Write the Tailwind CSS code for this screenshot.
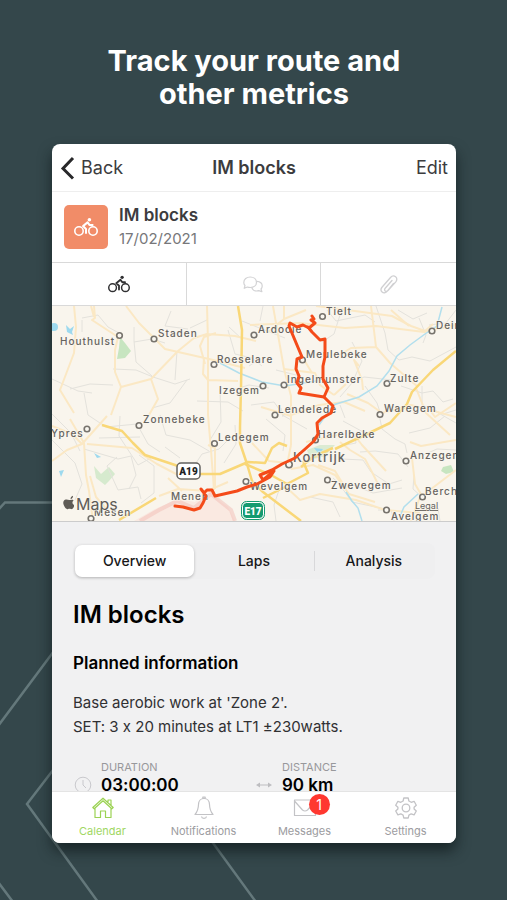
<!DOCTYPE html>
<html lang="en">
<head>
<meta charset="utf-8">
<meta name="viewport" content="width=device-width, initial-scale=1">
<title>IM blocks</title>
<script src="https://cdn.jsdelivr.net/npm/@tailwindcss/browser@4"></script>
</head>
<body class="bg-[#34474b] font-['Inter',sans-serif] [font-feature-settings:'calt'_0]">
<svg width="0" height="0" class="absolute" aria-hidden="true">
  <symbol id="bike" viewBox="0 0 24 19">
    <g fill="none" stroke="currentColor" stroke-width="1.6" stroke-linecap="round" stroke-linejoin="round">
      <circle cx="5" cy="13.5" r="4.2"/><circle cx="19" cy="13.5" r="4.2"/>
      <path stroke-width="2" d="M12 15.5V11.4L9 8.6L13.6 4.9L15.6 7.6H18.6"/>
    </g>
    <circle cx="15.4" cy="2.2" r="1.8" fill="currentColor"/>
  </symbol>
</svg>
<main class="relative min-h-screen overflow-hidden pt-11 pr-[51px] pb-[58px] pl-[52px]">
  <svg class="absolute top-0 left-0 h-[900px] w-[507px]" viewBox="0 0 507 900" fill="none" stroke="#64787b" stroke-width="2.5" aria-hidden="true">
    <path d="M-2 510L5 502.500H60M-2 726L60 643M60 761L27 804L98 902M-2 882L13 902M205 832L256 902"/>
  </svg>
  <h1 class="relative text-center text-[29px] leading-[33px] font-bold text-white">Track your route and<br>other metrics</h1>

  <section class="relative mt-[34px] overflow-hidden rounded-lg bg-white text-[#3c3c3e] shadow-[0_8px_14px_rgba(10,20,22,0.65)]">
    <header class="grid h-12 grid-cols-3 items-center border-b border-[#eeeeee] px-2 text-lg">
      <button type="button" class="flex items-center gap-[6px]">
        <svg class="h-6 w-[15px]" viewBox="0 0 15 24" fill="none" stroke="#28282a" stroke-width="3" aria-hidden="true"><path d="M13 2L3 12.500L13 22.500"/></svg>Back</button>
      <h2 class="text-center text-lg font-semibold">IM blocks</h2>
      <button type="button" class="justify-self-end">Edit</button>
    </header>

    <div class="flex h-[70px] items-center gap-[11px] px-3">
      <span class="flex size-11 items-center justify-center rounded-[5px] bg-[#f18c68] text-white"><svg class="h-5 w-6" aria-hidden="true"><use href="#bike"/></svg></span>
      <div>
        <p class="text-[17px] leading-6 font-semibold">IM blocks</p>
        <p class="text-[15px] leading-6 text-[#77777a]">17/02/2021</p>
      </div>
    </div>

    <div class="grid h-11 grid-cols-3 divide-x divide-[#d9d9d9] border-y border-[#d9d9d9]">
      <button type="button" aria-label="Activity" class="flex items-center justify-center text-[#303032]"><svg class="h-[18px] w-[22px]" aria-hidden="true"><use href="#bike"/></svg></button>
      <button type="button" aria-label="Comments" class="flex items-center justify-center">
        <svg class="h-[17px] w-5" viewBox="0 0 20 17" fill="none" stroke="#d2d2d4" stroke-width="1.200" stroke-linejoin="round" aria-hidden="true"><path d="M13.500 6.500C13.500 9.500 10.700 11.500 7.200 11.500C6.200 11.500 5.200 11.300 4.400 11L1.200 12.300L2 9.500C1.200 8.700.8 7.600.8 6.500C.8 3.300 3.600 1 7.200 1S13.500 3.300 13.500 6.500Z"/><path d="M13.700 5.400C17 5.600 19.200 7.600 19.200 10C19.200 11.200 18.800 12.200 18 13L18.900 15.700L15.800 14.600C12.800 15.500 9.800 14.400 8.700 11.600"/></svg></button>
      <button type="button" aria-label="Attachments" class="flex items-center justify-center">
        <svg class="h-[19px] w-[18px]" viewBox="0 0 18 19" fill="none" stroke="#d0d0d2" stroke-width="1.300" stroke-linecap="round" aria-hidden="true"><path d="M13.500 8.500L7.300 16.200C5.800 18 3.500 18.300 2.100 17C.7 15.700.8 13.600 2.200 12L10.500 2.500C11.900.9 14.100.6 15.600 1.800C17.200 3.100 17.200 5.200 15.800 6.900L8 15.500C7 16.500 5.900 16.500 5.200 15.900C4.400 15.200 4.400 14.200 5.200 13.300L12 5.500"/></svg></button>
    </div>

    <figure class="border-b border-[#cccccc]">
      <svg class="block h-[215px] w-full bg-[#f9f5ed]" viewBox="52 306 404 215" preserveAspectRatio="xMidYMid slice" role="img" aria-label="Route map">
        <g fill="#c7e5c0"><path d="M120 337L125 343L131 351L125 358L117 359L119 348Z"/><path opacity=".7" d="M94 466L101 474L109 467L115 474L109 481L105 485L96 478Z"/><path d="M443 467L451 465L454 472L446 474L441 471Z"/><path opacity=".6" d="M307 450L320 445L335 445L325 456L310 460Z"/></g>
        <g fill="#9dd9ee"><circle cx="54" cy="327" r="4"/><path d="M66 325L70 329L74 326L72 332L73 335L67 332Z"/><path d="M94 453L101 457L97 458Z"/><path d="M59 471L64 470L61 477Z"/><path d="M314 448L323 449L319 454Z"/></g>
        <path d="M134 521L155 509L178 499L195 502L207 488L221 502L228 507L235 521Z" fill="#fae9e1"/>
        <path d="M140 521L159 510L177 501L194 508L211 494L221 502L231 510L235 521" fill="none" stroke="#f2bdb5" stroke-width="4" opacity=".5"/>
        <g fill="none" stroke="#e4e2dc" stroke-width="1">
          <path d="M82 318L98 315L108 327L119 333M82 320L82 332M52 379L78 391L92 393M70 389L90 384L113 385M113 369L136 370L153 377L175 384L190 379M134 327L134 341L136 362L152 376M134 342L152 339L165 343M177 351L175 380M190 328L207 320M171 311L165 326L188 329M187 380L170 403L152 408M197 401L228 402L243 411M84 393L88 415L106 427L137 424L148 444L160 452M52 414L71 433L80 451M160 415L166 435L190 440L209 451M120 416L119 436L138 465L151 458M117 457L107 466L118 490L138 487L141 499M99 438L140 437M52 440L75 463L82 484L75 500M84 449L118 459L131 456L136 475L129 489M139 455L154 466L154 493L141 503M228 330L235 354L252 358L262 366M242 321L262 329L285 338M232 390L249 385L269 388M263 306L260 321M251 405L274 402L284 416L307 429M327 310L336 321L365 315L375 322M376 306L385 333L388 350M352 342L362 361L352 383L340 397M352 383L364 377L392 380M365 386L377 403L380 412M388 350L399 360L412 357L430 361L456 347M419 318L426 335L423 343M401 386L422 393L433 391L443 402L453 399M422 386L422 405L443 414L456 410M266 419L285 435L283 451M235 425L236 444L224 463M379 414L382 429L395 439L405 444L407 453M409 433L430 428L445 416M435 411L456 423M360 452L375 451L398 454L408 467M342 459L363 460L371 472L389 484L402 480M333 478L344 488L353 485L373 493L402 488M280 487L274 505L276 521M310 497L333 502L340 517M342 488L352 502L385 509M378 510L391 510L394 521M423 455L437 449L456 450M414 475L413 489L422 497M438 508L440 521M429 325L446 323L456 310M398 310L413 319L427 313M340 315L334 334L322 342"/>
          <path d="M192 469L202 454L219 449L230 438M165 447L180 458M220 389L221 422L210 440M260 359L249 366M243 340L229 327M276 370L300 376M281 408L283 417M340 405L345 418M343 421L365 433M355 436L356 443L346 445"/>
        </g>
        <g fill="none" stroke="#fbe8c4" stroke-width="2" stroke-linejoin="round">
          <path d="M74 306L76 327L74 353L60 390L74 413M94 306L95 318L92 320L118 337L115 350L115 372L121 387L111 415M126 306L139 323L165 349L209 359L245 368M207 306L208 341L208 415L211 450L214 490M121 387L151 379L158 399L149 415M151 379L178 351L194 338L207 334L235 336L256 341M205 364L200 346L204 337L216 333M204 358L203 374L208 380L238 381M91 306L94 317M70 419L84 443L86 475L89 491L93 521M52 461L67 450L82 444L107 416M87 444L132 448L157 464L178 475M82 444L72 434L52 426M90 476L96 497L109 512M159 496L178 489L207 491L228 482M168 478L182 491M208 445L215 448L215 489"/>
          <path d="M273 306L284 369L291 396L291 445M250 325L300 323L345 328L376 326L424 332L456 325M316 306L340 309L392 316L411 326L425 331L433 324M338 356L351 348L376 347L371 306M376 347L390 363L418 387M300 353L312 373M359 366L354 360L362 380L363 390M347 394L368 403L382 413L411 405L456 417M416 388L426 413L450 435M291 415L319 405L344 402L365 411M355 436L362 445L386 471M340 442L350 450L365 459L373 474L378 484M412 458L415 484L422 496L456 470M410 442L421 446L456 440M420 497L411 521M291 469L313 465L335 475L349 494L375 502M286 487L300 500L320 494L356 500L385 510L420 513M318 465L335 471L346 489M291 445L288 460M252 443L269 461L288 463"/>
          <path d="M284 306L284 319L268 332M284 319L306 310M284 369L315 373L320 385L334 395M334 395L346 384M306 442L337 435M430 410L435 417L456 403M261 407L291 416M391 310L409 326"/>
        </g>
        <g fill="none" stroke="#b2dfed" stroke-width="1.500"><path d="M442 307L437 326L425 334L410 345L397 356L389 371L377 386L359 397L333 405L319 425"/><path d="M220 363L239 373L262 382L285 386L316 381"/><path d="M418 494L404 507L400 516M346 492L352 501L358 508L362 521"/></g>
        <g fill="none" stroke="#f9d777" stroke-width="2.500" stroke-linejoin="round"><path d="M238 306L242 330L241 388L240 427L240 443L247 464L252 481L263 492L301 521"/><path d="M102 425L122 431L133 443L145 455L178 466M195 474L220 474L248 462L265 463L272 448L279 443L287 446M301 467L313 457L333 448M335 449L367 434L390 423L407 404L412 392L433 370L456 351"/><path d="M119 520L156 498M245 464L271 475L287 484L308 473L303 461M263 498L285 487"/></g>
        <g fill="#faf7f0" stroke="#77736d" stroke-width="1.600"><circle cx="119.500" cy="335.500" r="2.800"/><circle cx="154" cy="339" r="2.800"/><circle cx="214" cy="364.500" r="2.800"/><circle cx="322.500" cy="316.500" r="2.800"/><circle cx="254" cy="335" r="2.800"/><circle cx="302.500" cy="360" r="2.800"/><circle cx="263" cy="386" r="2.800"/><circle cx="284" cy="385" r="2.800"/><circle cx="432" cy="331" r="2.800"/><circle cx="387" cy="383.500" r="2.800"/><circle cx="275" cy="415" r="2.800"/><circle cx="380" cy="414.500" r="2.800"/><circle cx="139" cy="425.500" r="2.800"/><circle cx="87" cy="429" r="2.800"/><circle cx="214.500" cy="443.500" r="2.800"/><circle cx="315.500" cy="440" r="2.800"/><circle cx="289" cy="464.500" r="3.200"/><circle cx="406" cy="461" r="2.800"/><circle cx="327.500" cy="480" r="2.800"/><circle cx="246" cy="481.500" r="2.800"/><circle cx="422.500" cy="497" r="2.800"/><circle cx="386.500" cy="510" r="2.800"/><circle cx="91" cy="518.500" r="2.800"/></g>
        <g class="fill-[#66635f] text-[10px] font-medium tracking-widest" stroke="#faf7f0" stroke-width="2" paint-order="stroke" stroke-opacity=".6">
          <text x="60" y="345">Houthulst</text><text x="158" y="337">Staden</text><text x="217" y="363">Roeselare</text><text x="219" y="394">Izegem</text><text x="326" y="315">Tielt</text><text x="258" y="333">Ardooie</text><text x="306" y="358">Meulebeke</text><text x="287" y="383">Ingelmunster</text><text x="436" y="329">Deinze</text><text x="390" y="382">Zulte</text><text x="278" y="413">Lendelede</text><text x="384" y="412">Waregem</text><text x="143" y="423">Zonnebeke</text><text x="51" y="437">Ypres</text><text x="218" y="441">Ledegem</text><text x="318" y="438">Harelbeke</text><text x="410" y="459">Anzegem</text><text x="331" y="489">Zwevegem</text><text x="250" y="490">Wevelgem</text><text x="171" y="500">Menen</text><text x="425" y="495">Berchem</text><text x="391" y="520">Avelgem</text><text x="94" y="516">Mesen</text>
          <text x="293" y="462" class="text-[13px]">Kortrijk</text>
        </g>
        <g fill="none" stroke="#f44b19" stroke-width="3" stroke-linejoin="round" stroke-linecap="round"><path d="M312 316L314 319L311 320L315 323L309 328L303 325L297 327L290 323L289 326L302 357L297 359L296 369L299 376L297 383L301 388L299 393L324 397L333 406L331 413L322 418L317 423L318 434L314 441L304 450L295 458L282 464L272 470L260 475L263 480L274 471L270 477L257 484L247 487L237 491L215 496L212 490L207 490L204 493L201 489L206 496L203 503L200 508L194 510L183 507L175 506"/><path d="M308 327L312 332L320 340L325 339L325 357L323 366L323 379L328 388L324 397"/></g>
        <rect x="177" y="463" width="23" height="16" rx="4" fill="#fff" stroke="#62605d" stroke-width="1.500"/>
        <text x="188.500" y="474.500" text-anchor="middle" class="fill-[#222222] font-['Roboto',sans-serif] text-[10px] font-black">A19</text>
        <rect x="242.500" y="502.500" width="21" height="16" rx="4" fill="#159b70" stroke="#fff"/><rect x="241.500" y="501.500" width="23" height="18" rx="5" fill="none" stroke="#159b70"/>
        <text x="253" y="514.500" text-anchor="middle" class="fill-white font-['Roboto',sans-serif] text-[10px] font-black">E17</text>
        <g fill="#5f5b56"><path d="M70.600 499.200C70.400 497.400 71.500 496.200 73 495.800C73.200 497.500 72 499 70.600 499.200ZM74 506.600C73 508.800 71.900 509.500 70.900 509C69.900 508.500 69.100 508.500 68.100 509C66.600 509.700 65.200 508.200 64.200 506.100C62.500 502.900 63.200 500 65.900 499.600C67.200 499.300 68.300 500.100 69.200 500.100S71.800 499 73.600 500.200C71.900 501.600 72 504 74 505Z"/>
        <text x="76" y="510" class="text-base" stroke="#faf7f0" stroke-width="1" paint-order="stroke">Maps</text></g>
        <a href="#legal"><text x="415" y="509" class="fill-[#66635f] text-[9px] underline">Legal</text></a>
      </svg>
    </figure>

    <div class="bg-[#f1f1f2] px-[21px] pt-[21px] text-[#171719]">
      <div class="grid h-9 grid-cols-3 items-stretch rounded-lg bg-[#efeff0] p-[2px] text-sm font-medium">
        <button type="button" class="rounded-[7px] bg-white shadow-[0_1px_3px_rgba(0,0,0,0.25)]">Overview</button>
        <button type="button">Laps</button>
        <button type="button" class="flex items-center before:h-5 before:w-px before:bg-[#d8d8da]"><span class="flex-1">Analysis</span></button>
      </div>
      <h3 class="mt-5 text-2xl leading-8 font-semibold text-black">IM blocks</h3>
      <h4 class="mt-5 text-[17px] leading-6 font-semibold text-black">Planned information</h4>
      <p class="mt-4 text-[15px] leading-6 text-[#303032]">Base aerobic work at 'Zone 2'.<br>SET: 3 x 20 minutes at LT1 ±230watts.</p>
      <dl class="mt-5 grid grid-cols-2">
        <div class="grid grid-cols-[20px_1fr] items-end gap-x-2">
          <dt class="col-start-2 text-[11px] leading-4 text-[#98989b]">DURATION</dt>
          <dd class="col-span-2 grid grid-cols-subgrid items-center text-[17px] leading-5 font-semibold text-black"><svg class="size-[18px] justify-self-center" viewBox="0 0 18 18" fill="none" stroke="#c8c8cc" aria-hidden="true"><circle cx="9" cy="9" r="7.800"/><path d="M9 4V9L12 12"/></svg>03:00:00</dd>
        </div>
        <div class="grid grid-cols-[20px_1fr] items-end gap-x-2">
          <dt class="col-start-2 text-[11px] leading-4 text-[#98989b]">DISTANCE</dt>
          <dd class="col-span-2 grid grid-cols-subgrid items-center text-[17px] leading-5 font-semibold text-black"><svg class="h-2 w-4 justify-self-center" viewBox="0 0 16 8" fill="#bdbdc0" stroke="#bdbdc0" aria-hidden="true"><path d="M3 4H13" fill="none"/><path stroke="none" d="M0 4L4 1.500V6.500ZM16 4L12 1.500V6.500Z"/></svg>90 km</dd>
        </div>
      </dl>
    </div>

    <nav class="relative -mt-1 grid grid-cols-4 border-t border-[#e4e4e4] bg-white text-[11px] leading-4 text-[#9c9ca0]">
      <a href="#calendar" class="flex flex-col items-center gap-[3px] pt-1 pb-1 text-[#a0d763]">
        <svg class="size-6" viewBox="0 0 24 24" fill="none" stroke="#9bd253" stroke-width="1.200" stroke-linejoin="round" aria-hidden="true"><path d="M1.800 11.500L12 2.200L22.200 11.500L20.800 12.800L12 4.800L3.200 12.800ZM4 12.500V21.500H9.500V15H14.500V21.500H20V12.500M17 6V4H20V9"/></svg>Calendar</a>
      <a href="#notifications" class="flex flex-col items-center gap-[3px] pt-1 pb-1">
        <svg class="size-6" viewBox="0 0 24 24" fill="none" stroke="#c3c3c6" stroke-width="1.200" stroke-linejoin="round" aria-hidden="true"><path d="M12 2.500C8.800 2.500 6.600 5 6.500 8.500C6.400 13.500 5.500 15.500 3 18.500H21C18.500 15.500 17.600 13.500 17.500 8.500C17.400 5 15.200 2.500 12 2.500ZM10.800 2.500V1.200H13.200V2.500M9.500 20.500C9.800 23 14.200 23 14.500 20.500"/></svg>Notifications</a>
      <a href="#messages" class="relative flex flex-col items-center gap-[3px] pt-1 pb-1">
        <svg class="size-6" viewBox="0 0 24 24" fill="none" stroke="#c3c3c6" stroke-width="1.200" stroke-linejoin="round" aria-hidden="true"><path d="M1.500 4H22.500V19.500H1.500ZM1.500 5L9.500 14Q12 16 14.500 14L22.500 5"/></svg>Messages
        <span class="absolute top-[2px] left-1/2 ml-1 flex size-[21px] items-center justify-center rounded-full bg-[#ff3830] text-sm font-normal text-white">1</span></a>
      <a href="#settings" class="flex flex-col items-center gap-[3px] pt-1 pb-1">
        <svg class="size-6" viewBox="0 0 24 24" fill="none" stroke="#c3c3c6" stroke-width="1.300" stroke-linejoin="round" aria-hidden="true"><circle cx="12" cy="12" r="3.800"/><path d="M9.800 2H14.200L14.900 5L17.200 6.300L20.100 5.300L22.300 9.200L20.100 11.200V13L22.300 15L20.100 18.800L17.200 17.800L14.900 19.100L14.200 22H9.800L9.100 19.100L6.800 17.800L3.900 18.800L1.700 15L3.900 13V11.200L1.700 9.200L3.900 5.300L6.800 6.300L9.100 5Z"/></svg>Settings</a>
    </nav>
  </section>
</main>
</body>
</html>
